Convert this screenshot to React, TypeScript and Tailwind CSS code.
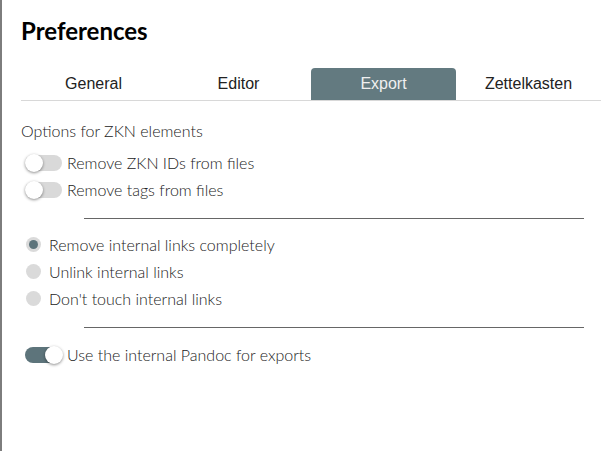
import React from 'react';

const tabs = ['General', 'Editor', 'Export', 'Zettelkasten'];

const Toggle = ({ on }: { on?: boolean }) => (
  <div
    className={
      'relative w-[37px] h-[16px] rounded-full ml-[4px] mr-[5px] shrink-0 ' +
      (on ? 'bg-[#5d747b]' : 'bg-[#d9d9d9]')
    }
  >
    <div
      className={
        'absolute top-[-1px] w-[18px] h-[18px] rounded-full bg-white shadow-[0_1px_3px_rgba(0,0,0,0.45)] ' +
        (on ? 'left-[20px]' : 'left-0')
      }
    />
  </div>
);

const Radio = ({ checked }: { checked?: boolean }) => (
  <div className="w-[15px] h-[15px] rounded-full bg-[#dadada] ml-[5px] mr-[8px] shrink-0 flex items-center justify-center">
    {checked && <div className="w-[9px] h-[9px] rounded-full bg-[#5d747b]" />}
  </div>
);

const App = () => {
  return (
    <div className="w-[601px] h-[451px] bg-white border-l-2 border-[#7d7d7d] pl-[19px] font-['Lato',sans-serif] text-[#333] overflow-hidden">
      <h1 className="pt-[17px] text-[24px] leading-[28px] font-bold text-black">Preferences</h1>

      <div className="mt-[23px] flex border-b border-[#d8d8d8] font-['Liberation_Sans',sans-serif] text-[16px]">
        {tabs.map((tab) => (
          <div
            key={tab}
            className={
              'w-[145px] h-[32px] flex items-center justify-center rounded-t-[4px] ' +
              (tab === 'Export' ? 'bg-[#637a80] text-[#f0f0f0]' : 'text-[#222]')
            }
          >
            {tab}
          </div>
        ))}
      </div>

      <div className="text-[16px] font-light text-[#222]">
        <div className="mt-[18px] h-[24px] flex items-center">Options for ZKN elements</div>
        <div className="mt-[6px] h-[27px] flex items-center">
          <Toggle />
          Remove ZKN IDs from files
        </div>
        <div className="h-[27px] flex items-center">
          <Toggle />
          Remove tags from files
        </div>
        <hr className="mt-[15px] ml-[63px] w-[500px] border-0 border-t border-[#666]" />

        <div className="mt-[12px] h-[27px] flex items-center">
          <Radio checked />
          Remove internal links completely
        </div>
        <div className="h-[27px] flex items-center">
          <Radio />
          Unlink internal links
        </div>
        <div className="h-[27px] flex items-center">
          <Radio />
          Don't touch internal links
        </div>
        <hr className="mt-[15px] ml-[63px] w-[500px] border-0 border-t border-[#666]" />

        <div className="mt-[13px] h-[27px] flex items-center">
          <Toggle on />
          Use the internal Pandoc for exports
        </div>
      </div>
    </div>
  );
};

export default App;
